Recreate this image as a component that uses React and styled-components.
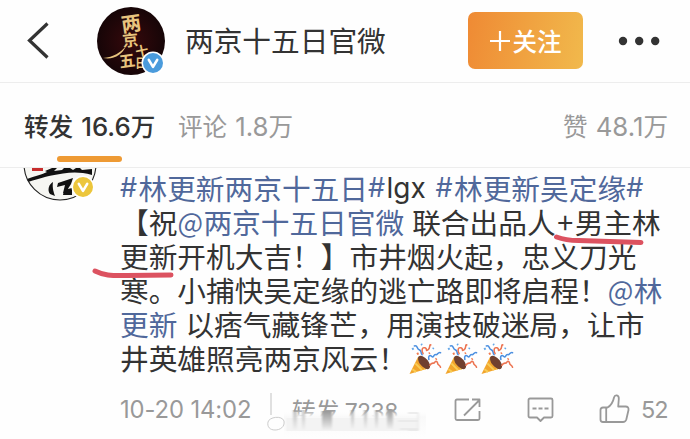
import React from "react";
import styled, { createGlobalStyle } from "styled-components";

const confetti = [
    { d: "M5 3c4-1 2 3 5 4s1 3 3 5", color: "#4b8fe0" },
    { d: "M14 11c-2-3-1-7 2-6s0 4 3 2 1-6 3-5", color: "#ec7350" },
    { d: "M20 17c-1-4 1-5 3-3s2-3 4-2 2-3 5-2", color: "#4b8fe0" },
    { d: "M21 23c2-4 4-1 5-3s3-1 3 1 2 1 3 4", color: "#ec7350" },
];

function Popper() {
    return (
        <svg width="33" height="32" viewBox="0 0 33 33" fill="none">
            <path d="M0 32 9 14 20 26Z" fill="#f2a52c" />
            <path d="M3 27 7 30M6 21 13 28M9 16 17 27" stroke="#f9cd55" strokeWidth="2" />
            <ellipse cx="15" cy="20" rx="4.3" ry="8.3" transform="rotate(-40 15 20)" fill="#70402f" />
            {confetti.map((c) => (
                <path key={c.d} d={c.d} stroke={c.color} strokeWidth="1.6" strokeLinecap="round" />
            ))}
            <path d="m3 5 1 2M12 1l1 1M24 6l1-1" stroke="#68a9e8" strokeWidth="2" />
            <path d="m20 11 1-1M27 17l1-1M8 10l1 2" stroke="#f07a50" strokeWidth="2" />
        </svg>
    );
}

function Verified({ color }) {
    return (
        <Badge>
            <svg width="24" height="24" viewBox="0 0 24 24">
                <circle cx="12" cy="12" r="11.5" fill="#fff" />
                <circle cx="12" cy="12" r="10" fill={color} />
                <path d="m7.8 8.8 4.2 7 4.2-7" fill="none" stroke="#fff" strokeWidth="2.6" strokeLinejoin="round" strokeLinecap="round" />
            </svg>
        </Badge>
    );
}

function Header() {
    return (
        <TopBar>
            <BackIcon width="22" height="38" viewBox="0 0 22 38">
                <path d="M20.5 1.5 2.5 18.5 20.5 35.5" fill="none" stroke="#333" strokeWidth="3.2" />
            </BackIcon>
            <Avatar>
                <svg width="68" height="68" viewBox="0 0 68 68">
                    <defs>
                        <radialGradient id="ink">
                            <stop offset="0" stopColor="#36090c" />
                            <stop offset="1" stopColor="#160507" />
                        </radialGradient>
                    </defs>
                    <circle cx="34" cy="34" r="34" fill="url(#ink)" />
                    <Calligraphy>
                        <text x="24" y="24" fontSize="20" transform="rotate(-8 34 15)">两</text>
                        <text x="25" y="39" fontSize="16" transform="rotate(-6 32 30)">京</text>
                        <text x="38" y="49" fontSize="13" transform="rotate(-12 44 43)">十</text>
                        <text x="22" y="60" fontSize="16" transform="rotate(-8 28 54)">五</text>
                        <text x="38" y="61" fontSize="12">日</text>
                    </Calligraphy>
                    <path d="M6 51c11-1 17-5 23-12-4 9-12 14-23 12Z" fill="#e8c47e" />
                </svg>
                <Verified color="#4a9bdc" />
            </Avatar>
            <Name>两京十五日官微</Name>
            <Follow>
                <svg width="20" height="20" viewBox="0 0 20 20">
                    <path d="M10 0v20M0 10h20" stroke="#fff" strokeWidth="2.2" />
                </svg>
                关注
            </Follow>
            <svg width="42" height="10" viewBox="0 0 42 10" fill="#333">
                <circle cx="5" cy="5" r="4.2" />
                <circle cx="21.2" cy="5" r="4.2" />
                <circle cx="37.2" cy="5" r="4.2" />
            </svg>
        </TopBar>
    );
}

function Tabs() {
    return (
        <TabBar>
            <Tab $active $width={131}>转发<Num>16.6</Num>万</Tab>
            <Tab $width={115}>评论<Num>1.8</Num>万</Tab>
            <Likes>赞<Num>48.1</Num>万</Likes>
        </TabBar>
    );
}

function App() {
    return (
        <Screen>
            <GlobalStyle />
            <Header />
            <Tabs />
            <Post>
                <AuthorPic>
                    <svg width="74" height="34" viewBox="0 0 74 34">
                        <defs>
                            <clipPath id="face">
                                <circle cx="37" cy="-4" r="36.5" />
                            </clipPath>
                        </defs>
                        <g clipPath="url(#face)">
                            <path d="M0 0h74v34H0z" fill="#f6f6f2" />
                            <path d="M9 0h11v3H9z" fill="#c72d2d" />
                            <path d="M22 3l7-3h5l-3 3 8-1 2-2h6l3 2 3-2h4l2 2 10-1v6C58 4 50 4 40 5.5 28 7 18 10 5 14l-1-3C12 8 18 7 24 4Z" fill="#111" />
                            <path d="M30 14c-4 2-6 8-3 12l5 2c-1-3-3-8-2-14ZM35 15l15-5-2 6-5 8-3 1 2-8-8 2ZM41 22l8-2v7h-9Z" fill="#111" />
                        </g>
                        <circle cx="37" cy="-4" r="36" fill="none" stroke="#222" strokeWidth="1.1" />
                    </svg>
                    <Verified color="#ecc63c" />
                </AuthorPic>
                <Content>
                    <Line>
                        <Link><Hash>#</Hash>林更新两京十五日<Hash>#</Hash></Link>
                        <Latin>lgx</Latin>
                        <Gap />
                        <Link><Hash>#</Hash>林更新吴定缘<Hash>#</Hash></Link>
                    </Line>
                    <Line>
                        【祝<Link><At>@</At>两京十五日官微</Link>
                        <Gap />
                        联合出品人<Plus>+</Plus>男主林
                    </Line>
                    <Line>更新开机大吉！】市井烟火起，忠义刀光</Line>
                    <Line>
                        寒。小捕快吴定缘的逃亡路即将启程！<Link><At>@</At>林</Link>
                    </Line>
                    <Line>
                        <Link>更新</Link>
                        <Gap />
                        以痞气藏锋芒，用演技破迷局，让市
                    </Line>
                    <Line>
                        井英雄照亮两京风云！
                        <Emojis>
                            <Popper />
                            <Popper />
                            <Popper />
                        </Emojis>
                    </Line>
                    <Footer>
                        <Time>10-20 14:02</Time>
                        <Smudged>
                            <Reposts>转发 <span>7238</span></Reposts>
                            <Smear width="164" height="46" viewBox="0 0 164 46">
                                <defs>
                                    <linearGradient id="haze" x2="0" y2="1">
                                        <stop offset="0" stopColor="#fff" stopOpacity="0" />
                                        <stop offset=".25" stopColor="#f9f9f9" />
                                        <stop offset="1" stopColor="#fefefe" />
                                    </linearGradient>
                                    <linearGradient id="drip" x2="0" y2="1">
                                        <stop offset="0" stopColor="#999" />
                                        <stop offset="1" stopColor="#f0f0f0" />
                                    </linearGradient>
                                    <filter id="soft" x="-50%" width="200%">
                                        <feGaussianBlur stdDeviation="1.3 .6" />
                                    </filter>
                                </defs>
                                <path d="M18 19h142v27H18z" fill="url(#haze)" />
                                <path d="M20 27h132v13H20z" fill="#f3f3f3" filter="url(#soft)" />
                                <g fill="url(#drip)" filter="url(#soft)">
                                    <path d="M27 19h4v20h-4zM36 19h3v20h-3z" opacity=".6" />
                                    <path d="M56 20h10v19H56z" />
                                    <path d="M85 19h3v19h-3zM98 19h3v19h-3zM109 19h3v19h-3z" opacity=".7" />
                                    <path d="M121 18h6v20h-6z" />
                                </g>
                                <path d="M5 2v22" fill="none" stroke="#ddd" />
                                <path d="M2 31c1-5 14-7 16-1 1 6-4 9-9 9s-8-3-7-8Z" fill="none" stroke="#ccc" strokeWidth="1" />
                                <path d="M142 22h10v17h-10M134 38h18M132 30h20" fill="none" stroke="#e8e8e8" strokeWidth="1.4" filter="url(#soft)" />
                            </Smear>
                        </Smudged>
                        <ShareIcon width="27" height="24" viewBox="0 0 27 24">
                            <path d="M15 1.5H3Q1.5 1.5 1.5 3v17.5Q1.5 22 3 22h21q1.5 0 1.5-1.5V13M10 17.5 25 2.5M18 1.5h7.5V9" />
                        </ShareIcon>
                        <CommentIcon width="27" height="26" viewBox="0 0 27 26">
                            <path d="M3 1.5h21q1.5 0 1.5 1.5v16q0 1.5-1.5 1.5h-7L13.5 24 10 20.5H3Q1.5 20.5 1.5 19V3Q1.5 1.5 3 1.5Z" />
                            <path d="M5.5 11.5h4M11.5 11.5h4M17.5 11.5h4" />
                        </CommentIcon>
                        <LikeIcon width="31" height="30" viewBox="0 0 31 30">
                            <path d="M8.5 13.5H4q-2.500 0-2.500 2.500v9.500q0 2.500 2.500 2.500h20q2.500 0 3.300-2.500L29.500 16q.4-3.500-3-3.500h-7.300l.6-7.500c.3-4.500-4-4.500-4.800-1.500C14 8.500 12 11.500 8.500 13.500ZM7.200 14v14" />
                        </LikeIcon>
                        <Count>52</Count>
                    </Footer>
                    <Stroke $left={434} $top={66} width="92" height="14" viewBox="0 0 92 14">
                        <path d="M2.5 3c8 3 12 3.5 22 3.500L87 8.500" />
                    </Stroke>
                    <Stroke $left={-28} $top={100} width="86" height="14" viewBox="0 0 86 14">
                        <path d="M3 3c10 5 17 4.500 32 4.500L79 7" />
                    </Stroke>
                </Content>
            </Post>
        </Screen>
    );
}

// Style :
const GlobalStyle = createGlobalStyle`
    body {
        margin: 0;
        background: #fff;
    }

    * {
        box-sizing: border-box;
    }

    svg {
        display: block;
        flex: none;
    }
`;

const Screen = styled.div`
    width: 690px;
    height: 439px;
    overflow: hidden;
    background: #fefefe;
    color: #333;
    font-family: "Noto Sans CJK SC", sans-serif;
    white-space: nowrap;
`;

const TopBar = styled.header`
    display: flex;
    align-items: center;
    height: 83px;
    padding-left: 27px;
    border-bottom: 1px solid #ededed;
`;

const BackIcon = styled.svg`
    margin-bottom: 1px;
`;

const Avatar = styled.div`
    position: relative;
    width: 68px;
    height: 68px;
    margin-left: 48px;
    margin-bottom: 1px;
`;

const Badge = styled.div`
    position: absolute;
    right: 0;
    bottom: 0;
`;

const Calligraphy = styled.g`
    font-family: "Noto Sans CJK SC", sans-serif;
    font-weight: 700;
    fill: #e8c47e;
`;

const Name = styled.div`
    width: 283px;
    margin-left: 20px;
    margin-bottom: 3px;
    font-size: 28.7px;
`;

const Follow = styled.button`
    display: flex;
    align-items: center;
    justify-content: center;
    gap: 3px;
    width: 115px;
    height: 57px;
    margin: 0 35px 1px 0;
    padding: 0;
    border: 0;
    border-radius: 7px;
    background: linear-gradient(100deg, #ef8a34, #f1b94c);
    color: #fff;
    font-family: inherit;
    font-size: 24.5px;
    font-weight: 500;
`;

const TabBar = styled.nav`
    display: flex;
    height: 85px;
    padding: 0 22px 0 24px;
    border-bottom: 1px solid #ededed;
    font-size: 24.6px;
    line-height: 84px;
`;

const Num = styled.span`
    margin-left: 8px;
    font-family: Inter, sans-serif;
    font-size: 25.8px;
`;

const Tab = styled.div`
    position: relative;
    width: ${(p) => p.$width}px;
    margin-right: 23px;
    color: ${(p) => (p.$active ? "#333" : "#999")};
    font-weight: ${(p) => (p.$active ? 500 : 400)};

    &::after {
        content: "";
        display: ${(p) => (p.$active ? "block" : "none")};
        position: absolute;
        left: 33px;
        bottom: 5px;
        width: 65px;
        height: 6px;
        border-radius: 3px;
        background: #ee9a34;
    }
`;

const Likes = styled.div`
    margin-left: auto;
    color: #999;
`;

const Post = styled.article`
    display: flex;
    padding-left: 23px;
`;

const AuthorPic = styled.div`
    position: relative;
    width: 74px;
    height: 32px;

    ${Badge} {
        right: 2px;
        bottom: 1px;
    }
`;

const Content = styled.div`
    position: relative;
    margin-left: 23px;
    padding-top: 3px;
`;

const Line = styled.p`
    display: flex;
    align-items: center;
    height: 34px;
    margin: 0;
    font-size: 28.7px;
    line-height: 34px;
`;

const Link = styled.span`
    display: flex;
    color: #50689b;
`;

const Hash = styled.span`
    width: 18.5px;
    font-family: Inter, sans-serif;
    font-size: 27px;
`;

const At = styled.span`
    width: 26px;
    font-size: 27px;
`;

const Plus = styled.span`
    width: 19px;
    text-align: center;
`;

const Latin = styled.span`
    width: 41px;
    font-family: Inter, sans-serif;
    font-size: 28px;
`;

const Gap = styled.span`
    width: 8px;
`;

const Emojis = styled.span`
    display: flex;
    gap: 3px;
    margin-left: 2px;
    padding-top: 2px;
`;

const Footer = styled.footer`
    display: flex;
    align-items: center;
    height: 64px;
    padding-top: 5px;
    color: #999;
    font-size: 23.7px;

    svg {
        fill: none;
        stroke: #999;
        stroke-width: 1.8;
        stroke-linejoin: round;
    }
`;

const Time = styled.time`
    width: 146px;
    font-family: Inter, sans-serif;
    font-size: 23.8px;
    letter-spacing: -0.1px;
`;

const Smudged = styled.div`
    position: relative;
    width: 188px;
    padding-left: 26px;
`;

const Reposts = styled.div`
    span {
        font-family: Inter, sans-serif;
        font-size: 23px;
        letter-spacing: -0.6px;
    }
`;

const Smear = styled.svg`
    && {
        stroke: none;
    }
    position: absolute;
    left: 0;
    top: -2px;
`;

const ShareIcon = styled.svg``;

const CommentIcon = styled.svg`
    margin: 1px 0 0 46px;
`;

const LikeIcon = styled.svg`
    margin-left: 45px;
    margin-bottom: 2px;
`;

const Count = styled.span`
    margin-left: 11px;
    font-family: Inter, sans-serif;
    font-size: 23.5px;
    letter-spacing: -1px;
`;

const Stroke = styled.svg`
    position: absolute;
    left: ${(p) => p.$left}px;
    top: ${(p) => p.$top}px;
    fill: none;
    stroke: #dc5260;
    stroke-width: 5;
    stroke-linecap: round;
`;

export default App;
